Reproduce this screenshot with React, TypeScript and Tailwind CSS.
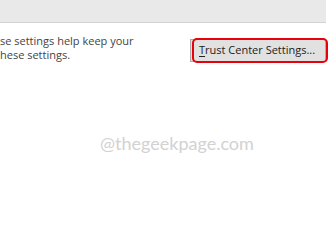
export default function App() {
  return (
    <div className="w-[336px] h-[245px] bg-white overflow-hidden font-['Open_Sans','Noto_Sans',sans-serif]">
      <div className="flex">
        <div className="w-[326px] h-[23px] bg-[#e9e9e9] border-b border-[#d4d4d4]" />
        <div className="flex-1" />
      </div>
      <div className="flex items-start justify-between pt-[11px] pr-[10px]">
        <div className="text-[11px] leading-[14px] text-[#444444] whitespace-nowrap">
          <p>se settings help keep your</p>
          <p>hese settings.</p>
        </div>
        <div className="mt-[5px] relative">
          <div className="h-[23px] w-[136px] bg-[#e1e1e1] border border-[#adadad] flex items-center pl-[8px] text-[11px] text-[#222222] whitespace-nowrap">
            <span>
              <span className="underline underline-offset-2">T</span>rust Center Settings...
            </span>
          </div>
          <div className="absolute -top-[1px] left-[2px] right-[-2px] -bottom-[1px] rounded-[5px] border-[2px] border-[#e8000b]" />
        </div>
      </div>
      <div className="mt-[71px] pl-[100px] font-['Lato',sans-serif] text-[18px] leading-[20px] text-[#d2d2d2] whitespace-nowrap">@thegeekpage.com</div>
    </div>
  );
}
